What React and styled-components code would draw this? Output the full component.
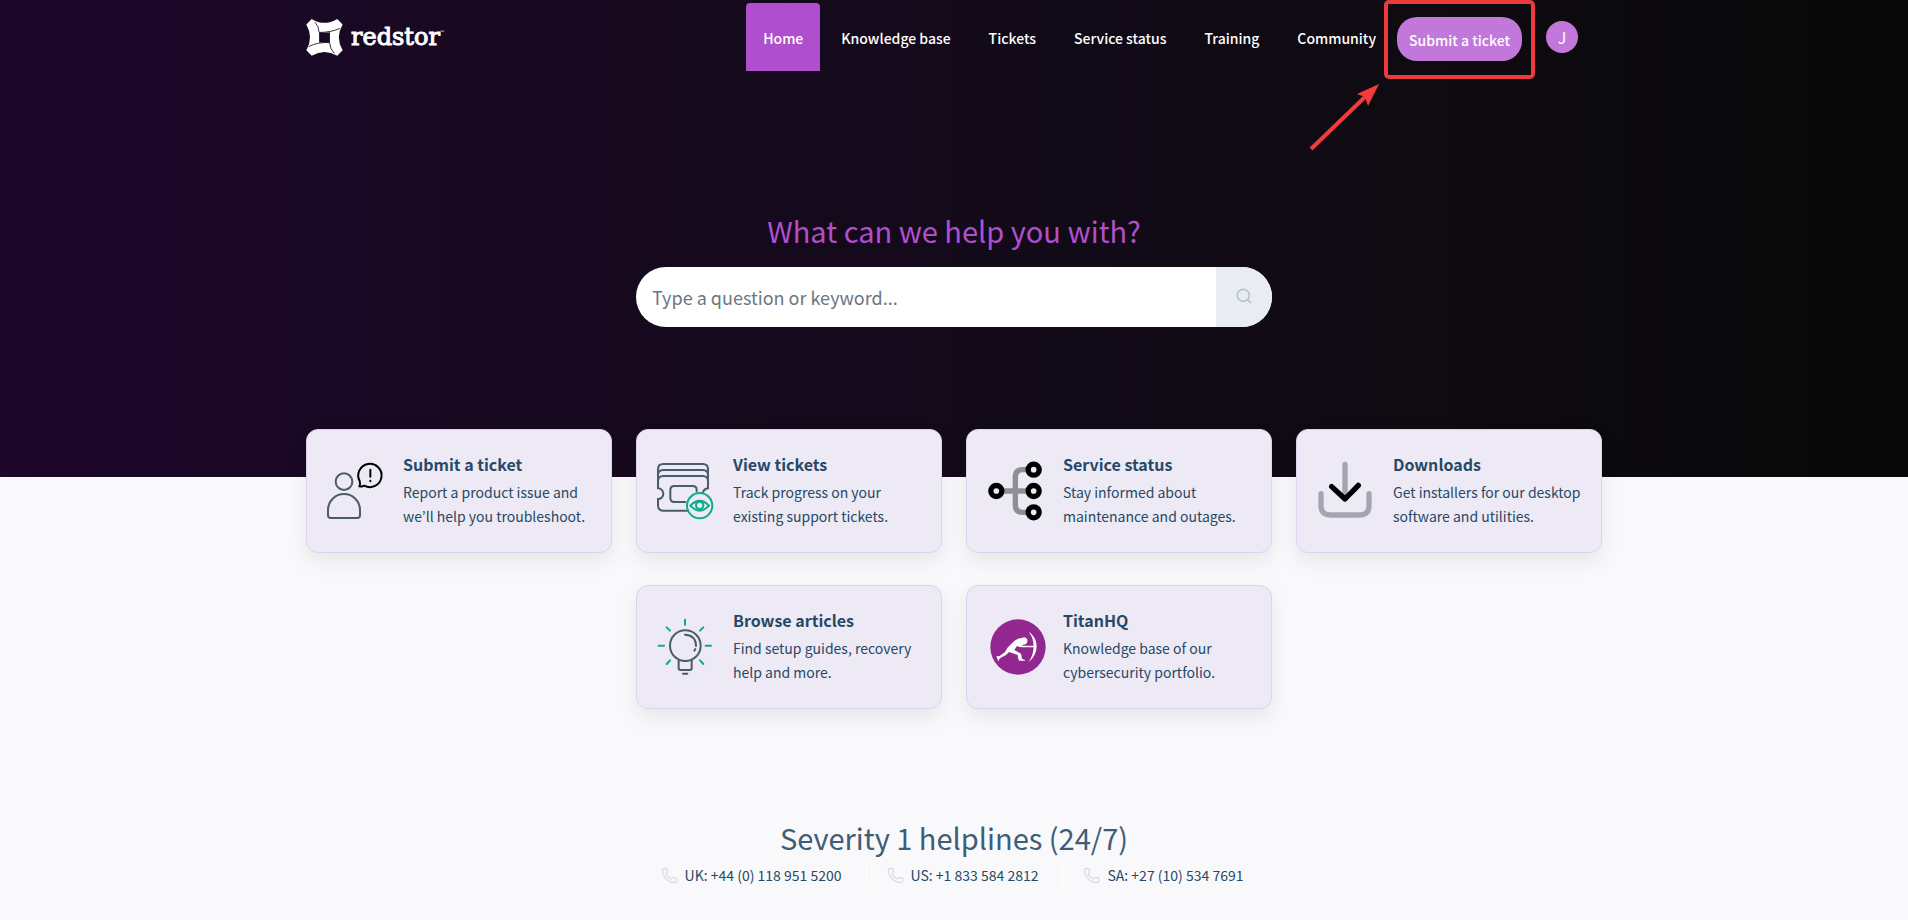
import React from "react";
import styled, { createGlobalStyle } from "styled-components";
import { Phone, Search } from "lucide-react";

const GlobalStyle = createGlobalStyle`
  *, *::before, *::after { box-sizing: border-box; }
  body {
    margin: 0;
    background: #f9f9fb;
    color: #264966;
    font-family: "Noto Sans CJK KR", "Noto Sans", sans-serif;
    font-size: 14px;
    line-height: 24px;
  }
  h1, h2, h3, p, ul { margin: 0; padding: 0; }
  ul { list-style: none; }
  a { color: inherit; text-decoration: none; }
`;

const Hero = styled.header`
  height: 477px;
  background: linear-gradient(90deg, #1d072b 0%, #180921 25%, #120a18 55%, #0e0b11 75%, #080808 100%);
`;

const Container = styled.div`
  max-width: 1296px;
  margin: 0 auto;
`;

const TopBar = styled(Container)`
  display: flex;
  align-items: flex-start;
  justify-content: space-between;
  padding: 3px 24px 0 0;
`;

const Brand = styled.a`
  display: flex;
  align-items: center;
  gap: 8px;
  height: 68px;
  color: #fff;
`;

const BrandName = styled.span`
  font: 24px/32px "DejaVu Serif", serif;
  -webkit-text-stroke: 1px #fff;
`;

const Trademark = styled.sup`
  font: 4px/4px "Liberation Sans", sans-serif;
  vertical-align: 12px;
  -webkit-text-stroke: 0;
`;

const TopRight = styled.div`
  display: flex;
  align-items: flex-start;
`;

const Nav = styled.nav`
  display: flex;
  gap: 4px;
`;

const NavLink = styled.a`
  padding: 23px 17px 21px;
  border-radius: 4px 4px 0 0;
  background: ${(p) => (p.$active ? "#b04fce" : "transparent")};
  color: #fff;
  font-weight: 500;
`;

const Highlight = styled.div`
  position: relative;
  margin: 14px 24px 0 4px;

  &::after {
    content: "";
    position: absolute;
    inset: -17px -13px -18px;
    border: 4px solid #ee3a3a;
    border-radius: 5px;
    pointer-events: none;
  }
`;

const Arrow = styled.svg`
  position: absolute;
  right: 100%;
  top: 100%;
  width: 72px;
  height: 68px;
  margin: 22px 16px 0 0;
`;

const SubmitButton = styled.button`
  display: block;
  height: 44px;
  padding: 2px 12px 0;
  border: 0;
  border-radius: 20px;
  background: #c277da;
  color: #fff;
  font: 500 14px/24px "Noto Sans CJK KR", sans-serif;
`;

const Avatar = styled.button`
  width: 32px;
  height: 32px;
  margin-top: 18px;
  padding: 0;
  border: 0;
  border-radius: 50%;
  background: #c277da;
  color: #fff;
  font: 16px/32px "Noto Sans CJK KR", sans-serif;
`;

const SearchArea = styled.div`
  max-width: 636px;
  margin: 0 auto;
  padding-top: 139px;
`;

const HeroTitle = styled.h1`
  color: #b04fce;
  font-size: 29px;
  font-weight: 400;
  line-height: 40px;
  text-align: center;
`;

const SearchForm = styled.form`
  display: flex;
  height: 60px;
  margin-top: 17px;
  overflow: hidden;
  border-radius: 30px;
  background: #fff;
`;

const SearchInput = styled.input`
  flex: 1;
  min-width: 0;
  padding: 0 16px;
  border: 0;
  outline: 0;
  background: transparent;
  color: #264966;
  font: 18px/28px "Noto Sans CJK KR", sans-serif;

  &::placeholder { color: #6c7680; opacity: 1; }
`;

const SearchButton = styled.button`
  display: flex;
  align-items: center;
  justify-content: center;
  width: 56px;
  padding: 0 0 2px;
  border: 0;
  background: #e9edf2;
  color: #b0bfce;
`;

const Cards = styled(Container)`
  position: relative;
  display: flex;
  flex-wrap: wrap;
  justify-content: center;
  gap: 32px 24px;
  margin-top: -48px;
`;

const Card = styled.a`
  display: flex;
  align-items: center;
  gap: 20px;
  width: 306px;
  height: 124px;
  padding: 0 8px 0 20px;
  border: 1px solid #dcd3ef;
  border-radius: 12px;
  background: #ede9f5;
  box-shadow: 0 8px 20px rgba(0, 0, 0, 0.08);
`;

const CardIcon = styled.svg`
  flex: none;
  width: 56px;
  height: 56px;
  overflow: visible;
  fill: none;
`;

const CardBody = styled.div`
  padding-bottom: 2px;
`;

const CardTitle = styled.h2`
  margin-bottom: 4px;
  font-size: 16px;
  font-weight: 600;
  line-height: 24px;
`;

const CardText = styled.p`
  white-space: pre-line;
`;

const Helplines = styled.section`
  display: flex;
  flex-direction: column;
  align-items: center;
  padding: 108px 0 32px;
`;

const HelpTitle = styled.h2`
  color: #3d5d79;
  font-size: 29px;
  font-weight: 400;
  line-height: 40px;
`;

const PhoneList = styled.ul`
  display: flex;
  margin-top: 6px;
`;

const PhoneItem = styled.li`
  padding: 0 24px 0 20px;
  line-height: 24px;

  & + & { border-left: 1px solid #fff; }
`;

const PhoneLink = styled.a`
  display: flex;
  align-items: center;
  gap: 7px;

  svg { color: #d6dee6; }
`;

const slate = "#4a5b6c";
const green = "#0bab87";

const UserIcon = () => (
  <g strokeWidth="6" strokeLinejoin="round" strokeLinecap="round">
    <circle cx="144" cy="185" r="25" stroke={slate} />
    <path d="M96 270a48 48 0 0 1 96 0v16q0 8-8 8h-80q-8 0-8-8z" stroke={slate} />
    <path d="M191 183a35 35 0 1 1 14 14q-7 4-15 2q4-7 1-16z" stroke="#000" />
    <path d="M223 149v21M223 182v2" stroke="#000" />
  </g>
);

const TicketIcon = () => (
  <g strokeWidth="6" strokeLinecap="round">
    <path
      d="M207 272H112q-16 0-16-16v-19a16 16 0 0 0 0-32V148q0-16 16-16h118q16 0 16 16v57q-11 1-15 11M96 165q0-15 16-15h118q16 0 16 15M96 183q0-15 16-15h118q16 0 16 15"
      stroke={slate}
    />
    <path d="M178 246h-33q-12 0-12-12v-24q0-12 12-12h55q12 0 12 12v4" stroke={slate} />
    <circle cx="221" cy="257" r="38" fill="#ede9f5" stroke={green} />
    <path d="M193 257q28-30 56 0q-28 30-56 0z" stroke={green} />
    <circle cx="221" cy="256" r="11" stroke={green} />
  </g>
);

const NodesIcon = () => (
  <g strokeWidth="16">
    <path d="M137 213h80M217 149h-17q-22 0-22 22v84q0 22 22 22h17" stroke="#8f8e94" />
    {[[121, 213], [233, 149], [233, 213], [233, 277]].map(([x, y]) => (
      <circle key={`${x}-${y}`} cx={x} cy={y} r="16.5" fill="#ede9f5" stroke="#000" />
    ))}
  </g>
);

const DownloadIcon = () => (
  <g strokeWidth="16" strokeLinecap="round" strokeLinejoin="round">
    <path d="M177 133v96M105 221v36q0 28 28 28h88q28 0 28-28v-36" stroke="#a6a4ae" />
    <path d="M137 200l40 37l40-41" stroke="#000" />
  </g>
);

const BulbIcon = () => (
  <g strokeWidth="6" strokeLinecap="round" strokeLinejoin="round">
    <circle cx="178" cy="209" r="46" stroke={slate} />
    <path
      d="M158 252v25q0 5 5 5h29q5 0 5-5v-25M171 293h13M177 176q33 2 33 34M208 219l-3 5"
      stroke={slate}
    />
    <path
      d="M177 131v15M98 209h16M239 209h16M122 154l10 10M232 154l-10 10M122 264l10-11M232 264l-10-11"
      stroke={green}
    />
  </g>
);

const ArcherIcon = () => (
  <g>
    <circle cx="186" cy="213" r="83" fill="#92278f" />
    <path
      d="M197 186q10-6 16 2q4 10-4 17l-8 1l-3 3h38v5h-36l-10-1l-7-3l-8 12l18 10q3 2 3 6l2 10l9 4v2h-18q-4-9-4-17l-26-9q-12 14-22 15l-9 8l2 3h-4q-2-8-5-13l10-1l16-12q7-15 19-25q14-16 31-17z"
      fill="#fff"
    />
    <path d="M217 165q26 20 25 47q-1 28-25 47q15-20 16-47q0-27-16-47z" fill="#fff" />
  </g>
);

const cards = [
  { title: "Submit a ticket", text: "Report a product issue and\nwe’ll help you troubleshoot.", Icon: UserIcon },
  { title: "View tickets", text: "Track progress on your\nexisting support tickets.", Icon: TicketIcon },
  { title: "Service status", text: "Stay informed about\nmaintenance and outages.", Icon: NodesIcon },
  { title: "Downloads", text: "Get installers for our desktop\nsoftware and utilities.", Icon: DownloadIcon },
  { title: "Browse articles", text: "Find setup guides, recovery\nhelp and more.", Icon: BulbIcon },
  { title: "TitanHQ", text: "Knowledge base of our\ncybersecurity portfolio.", Icon: ArcherIcon },
];

const navItems = ["Home", "Knowledge base", "Tickets", "Service status", "Training", "Community"];

const phones = ["UK: +44 (0) 118 951 5200", "US: +1 833 584 2812", "SA: +27 (10) 534 7691"];

const BrandMark = () => (
  <svg width="37" height="37" viewBox="51 57 110 110" aria-hidden="true">
    <path
      fill="#fff"
      fillRule="evenodd"
      d="M68 57q37 23 76 0l16 16q-23 38 0 77l-16 16q-38-22-76 0l-16-16q22-39 0-77zM90 97v30h31V97z"
    />
    <path
      d="M78 67q11 10 12 30q35 0 62-12M121 96v31q2 21 14 32M121 127q-35-2-62 12"
      fill="none"
      stroke="#190922"
      strokeWidth="2.5"
    />
  </svg>
);

export default function App() {
  return (
    <>
      <GlobalStyle />
      <Hero>
        <TopBar>
          <Brand href="#home">
            <BrandMark />
            <BrandName>
              redstor<Trademark>™</Trademark>
            </BrandName>
          </Brand>
          <TopRight>
            <Nav>
              {navItems.map((item, i) => (
                <NavLink key={item} href="#" $active={i === 0}>
                  {item}
                </NavLink>
              ))}
            </Nav>
            <Highlight>
              <SubmitButton type="button">Submit a ticket</SubmitButton>
              <Arrow viewBox="0 0 72 68" aria-hidden="true">
                <path d="M2 66L56 14" stroke="#f43b3b" strokeWidth="4" />
                <path d="M70 1L48 11L56 14L59 23z" fill="#f43b3b" />
              </Arrow>
            </Highlight>
            <Avatar type="button">J</Avatar>
          </TopRight>
        </TopBar>
        <SearchArea>
          <HeroTitle>What can we help you with?</HeroTitle>
          <SearchForm role="search">
            <SearchInput type="text" aria-label="Search" placeholder="Type a question or keyword..." />
            <SearchButton type="button" aria-label="Search">
              <Search size={18} strokeWidth={2} />
            </SearchButton>
          </SearchForm>
        </SearchArea>
      </Hero>
      <main>
        <Cards>
          {cards.map(({ title, text, Icon }) => (
            <Card key={title} href="#">
              <CardIcon viewBox="93 129 168 168" aria-hidden="true">
                <Icon />
              </CardIcon>
              <CardBody>
                <CardTitle>{title}</CardTitle>
                <CardText>{text}</CardText>
              </CardBody>
            </Card>
          ))}
        </Cards>
        <Helplines>
          <HelpTitle>Severity 1 helplines (24/7)</HelpTitle>
          <PhoneList>
            {phones.map((phone) => (
              <PhoneItem key={phone}>
                <PhoneLink href={`tel:${phone.slice(4).replace(/[^+\d]/g, "")}`}>
                  <Phone size={17} strokeWidth={2} />
                  {phone}
                </PhoneLink>
              </PhoneItem>
            ))}
          </PhoneList>
        </Helplines>
      </main>
    </>
  );
}
